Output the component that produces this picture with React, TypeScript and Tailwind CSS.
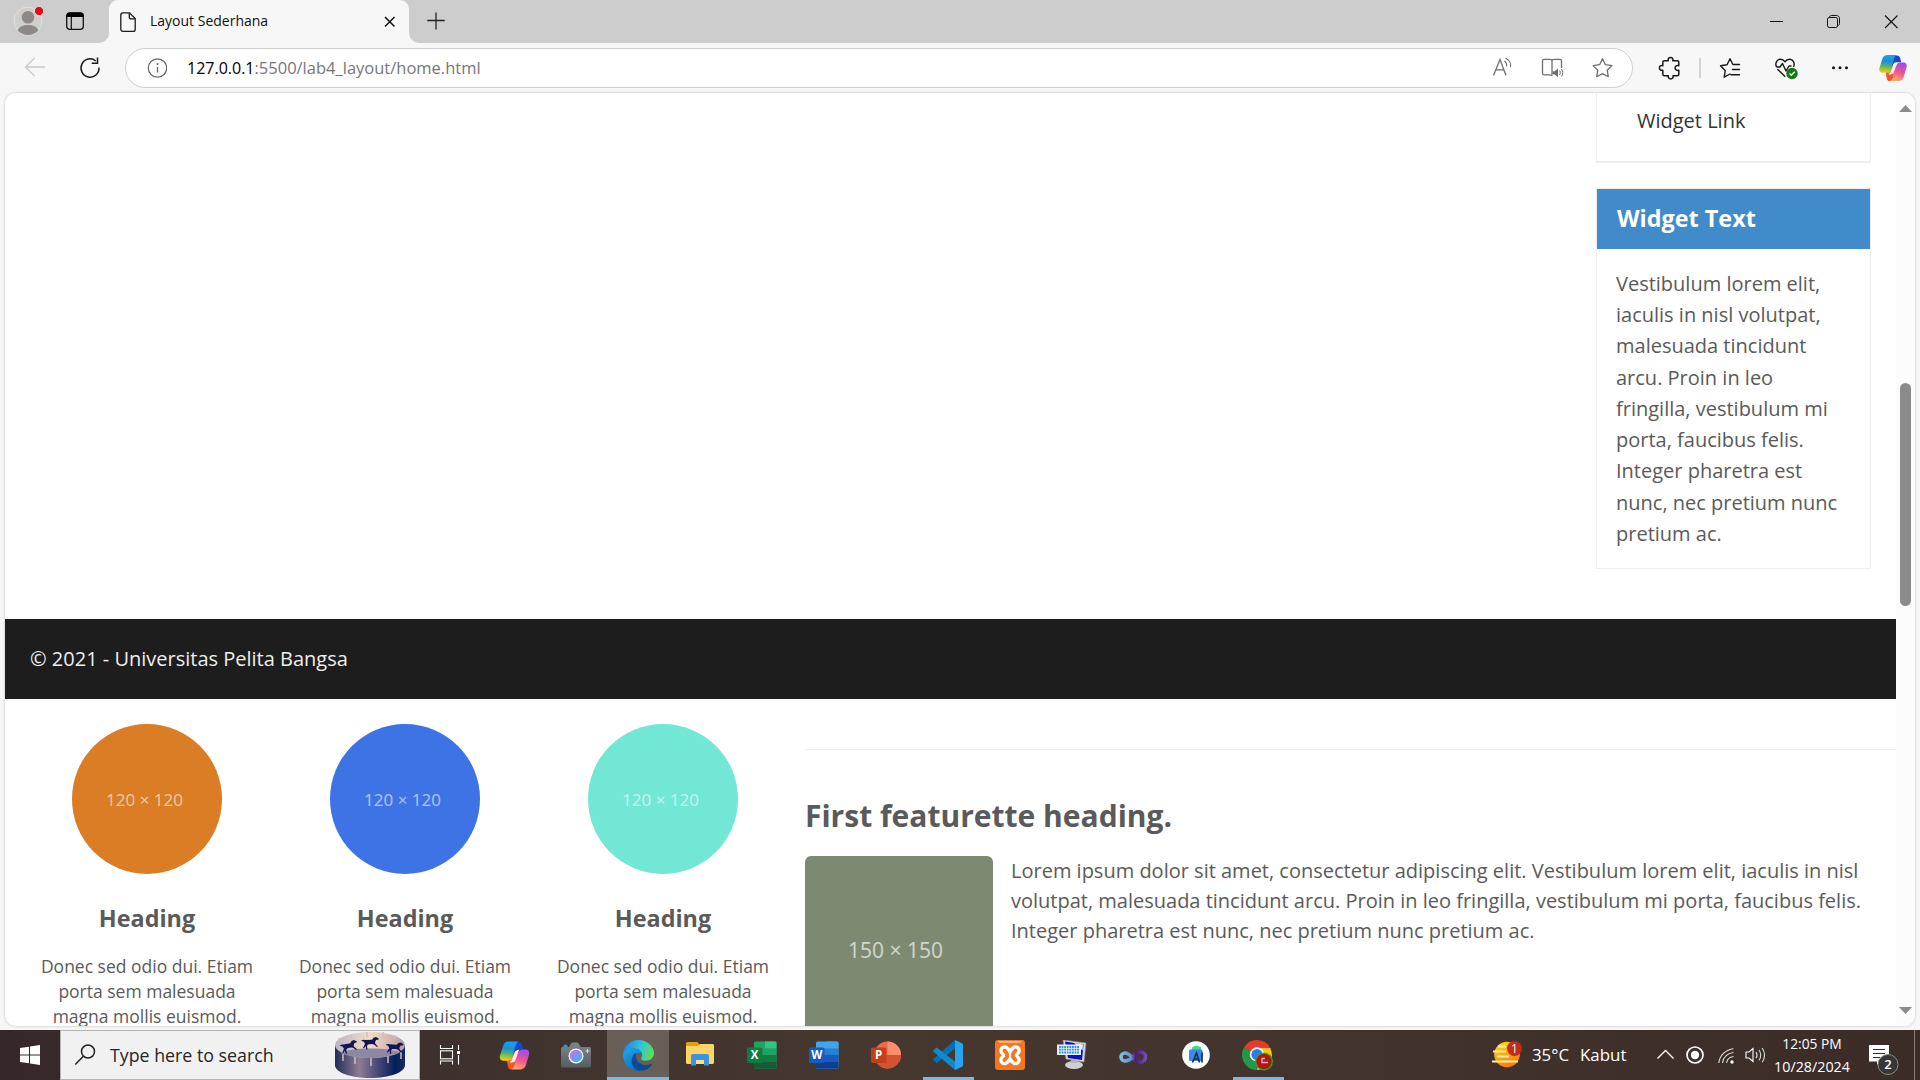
import type { ReactNode } from "react";

function Svg({ w, h, vb, className = "", children }: { w: number; h: number; vb?: string; className?: string; children: ReactNode }) {
  return (
    <svg width={w} height={h} viewBox={vb ?? `0 0 ${w} ${h}`} fill="none" className={`block shrink-0 ${className}`}>
      {children}
    </svg>
  );
}

function CopilotIcon({ size, id }: { size: number; id: string }) {
  return (
    <Svg w={size} h={size} vb="0 0 30 30">
      <defs>
        <linearGradient id={`${id}a`} x1="8" y1="2" x2="6" y2="20" gradientUnits="userSpaceOnUse">
          <stop offset="0" stopColor="#1b9ff0" />
          <stop offset="0.35" stopColor="#1c8fd8" />
          <stop offset="0.65" stopColor="#62b95c" />
          <stop offset="1" stopColor="#fbd107" />
        </linearGradient>
        <linearGradient id={`${id}b`} x1="24" y1="10" x2="18" y2="29" gradientUnits="userSpaceOnUse">
          <stop offset="0" stopColor="#a14ee8" />
          <stop offset="0.5" stopColor="#ee5591" />
          <stop offset="1" stopColor="#ffad6b" />
        </linearGradient>
      </defs>
      <path d="M12 2h7c2 0 3 1 3.500 3l1 4h-5c-2 0-3 1-3.600 3l-4 14" fill="#1648c8" />
      <path d="M9 17l6-4h4l-3 12c-.6 2-1.800 3.500-3.500 3.500h-1c-1.600 0-2.400-1-2.800-2.500L7.500 20z" fill="#f2542d" />
      <path d="M9.500 1.500h10c-1.500.2-2.600 1.500-3.200 3.300L12.800 17c-.7 2.300-2 3-4 3H4.500C1.500 20 .2 18 1 15L4 5.500c.8-2.500 2.500-4 5.500-4z" fill={`url(#${id}a)`} />
      <path d="M20.500 28.500h-8.700c1.400-.3 2.200-1.500 2.800-3.300L18.200 13c.7-2.500 2-3.700 4-3.700h3.300c3 0 4.300 2 3.500 5L26 24.500c-.8 2.500-2.500 4-5.500 4z" fill={`url(#${id}b)`} />
      <path d="M15.600 11l1.300-.9c.8-.5 1.600-.8 2.600-.8l-4 11.500-2.700 1c-1 .3-2 .1-2.800-.6 1.500-.6 2.300-1.600 2.800-3.400z" fill="#fbe9ee" />
    </Svg>
  );
}

function TabStrip() {
  return (
    <div className="flex h-[43px] shrink-0 bg-[#cdcdcd]">
      <div className="flex w-[109px] shrink-0 items-start rounded-br-[10px]">
        <Svg w={34} h={36} className="ml-3">
          <circle cx="16" cy="21" r="14" fill="#d1cfcd" stroke="#e3e1df" />
          <circle cx="16" cy="17.300" r="6.300" fill="#8e8986" />
          <path d="M5.800 30.500C7 26.500 11 25 16 25s9 1.500 10.200 5.500A14 14 0 0 1 16 35a14 14 0 0 1-10.200-4.500z" fill="#8e8986" />
          <circle cx="27" cy="11" r="4.600" fill="#e30b12" stroke="#e6dcdb" />
        </Svg>
        <Svg w={20} h={20} className="mt-[11px] ml-[19px]">
          <rect x="1.700" y="2" width="16.600" height="16.300" rx="3" stroke="#111" strokeWidth="1.300" />
          <path d="M1.500 6V4.500a3 3 0 0 1 3-3h11a3 3 0 0 1 3 3V6z" fill="#000" />
          <path d="M6.300 6v12" stroke="#111" strokeWidth="1.200" />
        </Svg>
      </div>
      <div className="relative flex w-[300px] shrink-0 rounded-t-[9px] bg-[#f7f7f7]">
        <Svg w={10} h={10} className="absolute bottom-0 -left-[10px]"><path d="M10 0v10H0A10 10 0 0 0 10 0z" fill="#f7f7f7" /></Svg>
        <Svg w={10} h={10} className="absolute -right-[10px] bottom-0"><path d="M0 0v10h10A10 10 0 0 1 0 0z" fill="#f7f7f7" /></Svg>
        <Svg w={16} h={21} className="mt-[12px] ml-[11px]">
          <path d="M3 .8h6.500l5.700 5.700v10.700a2.200 2.200 0 0 1-2.200 2.200H3a2.200 2.200 0 0 1-2.200-2.200V3A2.200 2.200 0 0 1 3 .8z" stroke="#1a1a1a" strokeWidth="1.300" />
          <path d="M9.300 1v3.900c0 1.100.8 1.900 1.900 1.900h3.900" stroke="#1a1a1a" strokeWidth="1.300" />
        </Svg>
        <span className="mt-[11px] ml-[14px] text-[14px] leading-5 text-[#111]">Layout Sederhana</span>
        <Svg w={12} h={12} className="mt-[16px] mr-[13px] ml-auto"><path d="M1 1l9.500 9.500M10.500 1L1 10.500" stroke="#111" strokeWidth="1.500" /></Svg>
      </div>
      <Svg w={18} h={18} className="mt-[12px] ml-[18px]"><path d="M9 .5v17M.3 8.500h17.400" stroke="#222" strokeWidth="1.300" /></Svg>
      <Svg w={160} h={43} className="ml-auto">
        <path d="M10 21.500h13" stroke="#111" />
        <rect x="67.500" y="17.500" width="10" height="10" rx="1.800" stroke="#111" />
        <path d="M69.500 17.500c0-1.300.8-2 2-2h4.800c2 0 3.200 1.200 3.200 3.200v4.800c0 1.200-.7 2-2 2" stroke="#111" />
        <path d="M125 15.500l12.500 12.500M137.500 15.500L125 28" stroke="#111" strokeWidth="1.100" />
      </Svg>
    </div>
  );
}

function Toolbar() {
  return (
    <div className="flex h-[49px] shrink-0 items-start bg-[#f7f7f7]">
      <Svg w={22} h={20} className="mt-[14px] ml-[24px]"><path d="M21 10H1.500M10.500 1L1.500 10l9 9" stroke="#c9c9c9" strokeWidth="1.300" /></Svg>
      <Svg w={22} h={22} className="mt-[14px] ml-[33px]">
        <path d="M20 10.500A9 9.200 0 1 1 16.800 4" stroke="#1a1a1a" strokeWidth="1.500" />
        <path d="M18.500.5v5.800h-5.800" stroke="#1a1a1a" strokeWidth="1.500" />
      </Svg>
      <div className="mt-[5px] ml-[24px] flex h-[40px] w-[1508px] shrink-0 items-center rounded-full border border-[#cecece] bg-white">
        <Svg w={20} h={20} className="ml-[21px]">
          <circle cx="10.500" cy="10" r="9.200" stroke="#666" strokeWidth="1.200" />
          <path d="M10.500 9v5.500" stroke="#666" strokeWidth="1.300" />
          <circle cx="10.500" cy="6" r="1" fill="#666" />
        </Svg>
        <span className="ml-[20px] text-[16.500px] leading-6 whitespace-nowrap text-[#777]">
          <span className="text-[16px] text-black">127.0.0.1</span>:5500/lab4_layout/home.html
        </span>
        <Svg w={130} h={24} className="mr-[10px] ml-auto">
          <g stroke="#6e6e6e" strokeWidth="1.300">
            <path d="M1.500 19.500L8 3.500l6 16M4 13.800h8" />
            <path d="M12.500 5a5.500 5.500 0 0 1 2 5.500M13.500 2.200c3.500 1.500 6 5 5 9" strokeWidth="1.100" />
            <path d="M60 18.500V5c0-1-.6-1.700-1.700-1.700h-6.100c-1 0-1.700.7-1.700 1.700v12.200c0 1 .7 1.700 1.700 1.700h6.100c1 0 1.700.3 1.700 1M60 5c0-1 .7-1.700 1.700-1.700h6.100c1 0 1.700.7 1.700 1.700v7" />
            <path d="M67.500 14.500c1 1.500 1 3 0 4.500M69.500 13c1.700 2.300 1.700 5.200 0 7.500" strokeWidth="1" />
            <path d="M110.500 2.800l2.900 5.900 6.500.9-4.700 4.600 1.100 6.500-5.800-3.100-5.800 3.100 1.100-6.500-4.700-4.600 6.500-.9z" strokeLinejoin="round" />
          </g>
          <path d="M60.500 15.300h2.300l3.200-2.800v8.800l-3.200-2.800h-2.300z" fill="#6e6e6e" />
        </Svg>
      </div>
      <Svg w={287} h={49}>
        <g stroke="#1a1a1a" strokeWidth="1.500" strokeLinejoin="round" strokeLinecap="round">
          <path d="M30.500 17.500h4c-.7-2 .7-3.300 2.200-3.300s3 1.300 2.300 3.300h4.500a1.500 1.500 0 0 1 1.500 1.500v3.500c-2-.7-3.700.5-3.700 2.200s1.700 3 3.700 2.300v4a1.500 1.500 0 0 1-1.500 1.500h-4.300c.6 2-.7 3.200-2.300 3.200s-2.900-1.200-2.400-3.200h-4a1.500 1.500 0 0 1-1.500-1.500v-4c-2 .6-3.400-.7-3.400-2.300s1.400-2.800 3.400-2.200V19a1.500 1.500 0 0 1 1.500-1.500z" transform="translate(.8 .2)" />
          <path d="M97 31l-5.800 3.200 1-6.700-4.700-4.700 6.500-1 3-6.100 2.900 5.800h6.600M99.500 26.500h7M98 31.700h8.500" strokeWidth="1.400" />
          <path d="M143.300 23.500c-1.300-3.500.6-7 4-7.200 2-.1 3.400.8 4.700 2.500 1.300-1.700 2.700-2.600 4.700-2.500 3.500.2 5.300 3.700 4 7.200M144 24h3l2.500-3.500 3.500 7.500 3-5h2M144.800 26.500l7 6.800" strokeWidth="1.400" />
        </g>
        <path d="M67 15v20" stroke="#c8c8c8" strokeWidth="1.500" />
        <circle cx="159" cy="30.500" r="5.700" fill="#107c10" />
        <path d="M156.500 30.500l1.800 1.800 3.400-3.600" stroke="#fff" strokeWidth="1.300" />
        <circle cx="200.500" cy="24.700" r="1.500" fill="#111" />
        <circle cx="207" cy="24.700" r="1.500" fill="#111" />
        <circle cx="213.500" cy="24.700" r="1.500" fill="#111" />
        <g transform="translate(245.500 10.500)"><CopilotIcon size={29} id="cpt" /></g>
      </Svg>
    </div>
  );
}

const circles = ["bg-[#da7d25]", "bg-[#3e73e6]", "bg-[#72e7d5]"];

function Page() {
  return (
    <div className="h-full w-[1891px] shrink-0 overflow-hidden text-[20px] text-[#5a5a5a]">
      <div className="flex h-[526px] justify-end pr-[25px]">
        <aside className="w-[275px]">
          <div className="h-[70px] border border-t-0 border-b-2 border-[#eee] pt-[12px] pl-[40px] leading-[31px] text-[#333]">Widget Link</div>
          <div className="mt-[25px] h-[381px] border border-[#eee]">
            <h3 className="h-[60px] bg-[#428bca] pl-[20px] text-[23.400px] leading-[59px] font-bold text-white">Widget Text</h3>
            <p className="pt-[18.800px] pl-[19px] leading-[31.250px] whitespace-nowrap">
              Vestibulum lorem elit,<br />iaculis in nisl volutpat,<br />malesuada tincidunt<br />arcu. Proin in leo<br />fringilla, vestibulum mi<br />porta, faucibus felis.<br />Integer pharetra est<br />nunc, nec pretium nunc<br />pretium ac.
            </p>
          </div>
        </aside>
      </div>
      <footer className="h-[80px] bg-[#1d1d1d] pl-[25px] leading-[79px] text-[#eee]">© 2021 - Universitas Pelita Bangsa</footer>
      <div className="flex">
        <div className="flex w-[800px] shrink-0 pl-[13px]">
          {circles.map((color) => (
            <div key={color} className="w-[258px] pt-[25px] text-center">
              <div className={`mx-auto h-[150px] w-[150px] rounded-full text-[17px] leading-[151px] text-white/60 ${color}`}>
                <span className="-ml-[5px]">120 × 120</span>
              </div>
              <h3 className="mt-[28px] text-[23.400px] leading-[32px] font-bold">Heading</h3>
              <p className="mt-[20px] text-[17.500px] leading-[25px]">Donec sed odio dui. Etiam<br />porta sem malesuada<br />magna mollis euismod.</p>
            </div>
          ))}
        </div>
        <div className="min-w-0 flex-1 pt-[50px]">
          <hr className="border-t border-[#eee]" />
          <h2 className="mt-[47px] text-[30px] leading-[38px] font-bold">First featurette heading.</h2>
          <div className="mt-[21px] flex">
            <div className="h-[188px] w-[188px] shrink-0 rounded-md bg-[#7d8a71] text-center text-[21px] leading-[188px] text-white/65">
              <span className="-ml-[7px]">150 × 150</span>
            </div>
            <p className="ml-[18px] leading-[30px] whitespace-nowrap">
              Lorem ipsum dolor sit amet, consectetur adipiscing elit. Vestibulum lorem elit, iaculis in nisl<br />
              volutpat, malesuada tincidunt arcu. Proin in leo fringilla, vestibulum mi porta, faucibus felis.<br />
              Integer pharetra est nunc, nec pretium nunc pretium ac.
            </p>
          </div>
        </div>
      </div>
    </div>
  );
}

function ScrollBar() {
  return (
    <div className="flex w-[19px] shrink-0 flex-col items-center bg-[#fcfcfc] pt-[12px] pb-[12px]">
      <Svg w={13} h={7}><path d="M6.500 0L13 7H0z" fill="#8b8b8b" /></Svg>
      <div className="mt-[271px] h-[223px] w-[11px] rounded-full bg-[#8b8b8b]" />
      <Svg w={13} h={7} className="mt-auto"><path d="M6.500 7L13 0H0z" fill="#8b8b8b" /></Svg>
    </div>
  );
}

function OfficeIcon({ letter, tile, bands, round }: { letter: string; tile: string; bands: string[]; round?: boolean }) {
  return (
    <Svg w={30} h={28}>
      {round ? (
        <>
          <circle cx="16.500" cy="14" r="13.500" fill={bands[0]} />
          <path d="M16.500.5A13.500 13.500 0 0 1 30 14H16.500z" fill={bands[1]} />
          <path d="M3 14h27a13.500 13.500 0 0 1-27 0z" fill={bands[2]} />
        </>
      ) : (
        <>
          <rect x="7" y=".5" width="22.500" height="27" rx="1.500" fill={bands[0]} />
          <path d="M18 .5h10a1.500 1.500 0 0 1 1.500 1.500v5.500H18z" fill={bands[1]} />
          <path d="M7 14h22.500v7H7z" fill={bands[2]} />
          <path d="M7 21h22.500v5a1.500 1.500 0 0 1-1.500 1.500H8.500A1.500 1.500 0 0 1 7 26z" fill={bands[3]} />
          {letter === "X" && <path d="M18 7.500h11.500V14H18z" fill="#21a366" />}
          {letter === "W" && <path d="M7 7.500h22.500V14H7z" fill="#2b7cd3" />}
        </>
      )}
      <rect x="0" y="6.500" width="15.500" height="15.500" rx="1.500" fill={tile} />
      <text x="7.700" y="18.200" textAnchor="middle" fontSize="11.500" fontWeight="700" fill="#fff">{letter}</text>
    </Svg>
  );
}

const apps: { name: string; active?: boolean; line?: boolean; icon: ReactNode }[] = [
  {
    name: "tasks",
    icon: (
      <Svg w={22} h={20} className="-ml-[4px]">
        <path d="M1.500 0v3.500h12V0M1.500 19.500V16h12v3.500" stroke="#fff" strokeWidth="1.100" />
        <rect x="1.500" y="5.800" width="12" height="8" stroke="#fff" strokeWidth="1.100" />
        <path d="M19.500 0v5M19.500 10v9.500" stroke="#fff" strokeWidth="1.100" />
        <rect x="18" y="6" width="3" height="3" fill="#fff" />
      </Svg>
    ),
  },
  { name: "copilot", icon: <CopilotIcon size={31} id="cpb" /> },
  {
    name: "camera",
    icon: (
      <Svg w={30} h={28}>
        <defs>
          <linearGradient id="lens" x1="11" y1="8" x2="20" y2="20" gradientUnits="userSpaceOnUse"><stop stopColor="#d073dc" /><stop offset=".5" stopColor="#8a8df0" /><stop offset="1" stopColor="#22c0ee" /></linearGradient>
          <linearGradient id="body" x1="15" y1="3" x2="15" y2="27" gradientUnits="userSpaceOnUse"><stop stopColor="#7c848b" /><stop offset="1" stopColor="#555c63" /></linearGradient>
        </defs>
        <path d="M2 8c0-3 1-4.500 2.500-4.500S7 5 7 8z" fill="#1ba6e0" />
        <path d="M0 8.500C0 7 .7 6.300 1.500 6h6.500l2-3.500c.4-.7 1-1 1.800-1h4c.8 0 1.400.3 1.800 1l2 3.500h8.900c.8 0 1.500.5 1.500 1.500V25c0 .8-.7 1.500-1.500 1.500h-27A1.500 1.500 0 0 1 0 25z" fill="url(#body)" />
        <circle cx="15" cy="15" r="7.500" fill="#fff" />
        <circle cx="15" cy="15" r="6.200" fill="url(#lens)" />
        <path d="M26.500 8v4M24.500 10h4" stroke="#c7dbe4" strokeWidth="1.200" />
      </Svg>
    ),
  },
  {
    name: "edge",
    active: true,
    icon: (
      <Svg w={31} h={31} vb="0 0 30 30">
        <defs>
          <linearGradient id="eg" x1="3" y1="6" x2="29" y2="16" gradientUnits="userSpaceOnUse"><stop stopColor="#1d8fe0" /><stop offset=".45" stopColor="#2fc3dd" /><stop offset="1" stopColor="#62e04e" /></linearGradient>
          <linearGradient id="eb" x1="2" y1="12" x2="16" y2="30" gradientUnits="userSpaceOnUse"><stop stopColor="#1c9fe4" /><stop offset="1" stopColor="#0a63c9" /></linearGradient>
        </defs>
        <path d="M0 14C.5 6 7 0 15 0s15 6 15 12.500c0 4.500-3.500 7.500-8 7.500-3.500 0-5-1.200-4.500-2.300 1.500-2 1.400-4.700-.2-6.500C13 6.500 4 7.500 0 14z" fill="url(#eg)" />
        <path d="M0 14c2-4.500 6-5.800 10-5.800 3.800 0 7 1.700 8.300 5-4-1.700-9.300.8-9.300 6.300 0 5 4 9.300 8.500 10.300C8 31.300 0 24 0 14z" fill="url(#eb)" />
        <path d="M12.500 12.600C9.800 14 8.300 17 8.300 20c0 5.500 4.700 9.700 9.700 9.700 4 0 8-2.700 10-6 .4-.7-.2-1-.8-.7-5 2.500-11 .8-13.500-3.200-1.600-2.600-1.500-5.200-1.200-7.200z" fill="#0b4a94" />
      </Svg>
    ),
  },
  {
    name: "folder",
    icon: (
      <Svg w={28} h={24} className="-mt-[3px]">
        <path d="M0 3V1.500C0 .7.700 0 1.500 0h10l2 2.500V8H0z" fill="#e2a00a" />
        <path d="M0 4h12l2-2h12.500c.8 0 1.500.7 1.500 1.500v17c0 .8-.7 1.500-1.500 1.500h-25A1.500 1.500 0 0 1 0 20.500z" fill="#ffd466" />
        <path d="M5 23.500V14a2 2 0 0 1 2-2h14a2 2 0 0 1 2 2v9.500h-5V18h-8v5.500z" fill="#3c94dc" />
        <path d="M10 18h8v4h-8z" fill="#ffe08a" />
      </Svg>
    ),
  },
  { name: "excel", icon: <OfficeIcon letter="X" tile="#107c41" bands={["#21a366", "#33c481", "#107c41", "#185c37"]} /> },
  { name: "word", icon: <OfficeIcon letter="W" tile="#185abd" bands={["#41a5ee", "#41a5ee", "#185abd", "#103f91"]} /> },
  { name: "powerpoint", icon: <OfficeIcon letter="P" tile="#c43e1c" bands={["#ed6c47", "#ff8f6b", "#d35230"]} round /> },
  {
    name: "code",
    line: true,
    icon: (
      <Svg w={30} h={30}>
        <path d="M22 0l6.500 3c1 .5 1.500 1.200 1.500 2.300v19.400c0 1.100-.5 1.800-1.500 2.300L22 30z" fill="#2aa3ee" />
        <path d="M22 0v8.500L3.800 23l-3-2.200c-1-.8-1-1.600 0-2.400z" fill="#0071b7" />
        <path d="M22 30v-8.500L3.800 7.500l-3 2.200c-1 .8-1 1.600 0 2.400z" fill="#1288d0" />
      </Svg>
    ),
  },
  {
    name: "xampp",
    icon: (
      <Svg w={30} h={30}>
        <rect width="30" height="30" rx="3" fill="#f37622" />
        <path d="M3 1h24l-2 2H5z" fill="#fbb98b" />
        <path d="M9.500 10.500l11 9.500M20.500 10.500l-11 9.500" stroke="#fff" strokeWidth="10.500" strokeLinecap="round" />
        <path d="M9.500 10.500l2.500 3.200v3.300l-2.500 3M20.500 10.500L18 13.700V17l2.500 3" stroke="#f37622" strokeWidth="3.800" strokeLinecap="round" strokeLinejoin="round" />
      </Svg>
    ),
  },
  {
    name: "keyboard",
    icon: (
      <Svg w={30} h={30}>
        <path d="M6 0l23 3-2 19-18-3z" fill="#d5d5d5" stroke="#999" strokeWidth=".6" />
        <path d="M8 1.500l18.500 3L25 20l-14-2z" fill="#0a10c4" />
        <path d="M17 3l9 1.500-.5 6z" fill="#eef" />
        <ellipse cx="17" cy="25" rx="9" ry="4" fill="#cfcfcf" />
        <path d="M14 19h6v4h-6z" fill="#b5b5b5" />
        <rect x="0" y="4.500" width="24" height="10.500" fill="#e8eef2" />
        <path d="M2 7h20M2 9.700h20M2 12.500h20" stroke="#2b95d8" strokeWidth="1.800" strokeDasharray="1.800 .8" />
      </Svg>
    ),
  },
  {
    name: "studio",
    icon: (
      <Svg w={29} h={16} className="mt-[3px] -ml-[3px]">
        <defs><linearGradient id="vs" x1="0" y1="8" x2="29" y2="8" gradientUnits="userSpaceOnUse"><stop stopColor="#7ccbe8" /><stop offset=".45" stopColor="#6d8ed0" /><stop offset=".6" stopColor="#4b1789" /><stop offset="1" stopColor="#7a4fc2" /></linearGradient></defs>
        <path d="M15 8c-3 3-5.500 4-8 4a3.800 3.800 0 1 1 0-8c2.500 0 4.500 1.500 7.500 4.500s5.200 5 8 4.500a5 5 0 0 0 0-10c-3 0-5 2.500-7.500 5z" stroke="url(#vs)" strokeWidth="3.600" />
      </Svg>
    ),
  },
  {
    name: "android",
    icon: (
      <Svg w={28} h={28} className="-ml-px">
        <circle cx="14" cy="14" r="13.800" fill="#fff" />
        <path d="M9.500 9.500a5 4.800 0 0 1 10 0z" fill="#3ddc84" />
        <path d="M10.500 6l1.200 1.500M18.500 6l-1.200 1.500" stroke="#3ddc84" />
        <rect x="7" y="8.500" width="13.500" height="11.500" rx="1.500" fill="#3f86e8" />
        <path d="M10.500 21.500L14.500 12 17.500 21.500M11.500 18h5M20 11.500V21.500" stroke="#123047" strokeWidth="1.600" />
      </Svg>
    ),
  },
  {
    name: "chrome",
    line: true,
    icon: (
      <Svg w={32} h={31}>
        <path d="M15 15L2 7.500A15 15 0 0 1 28.500 8.500z" fill="#e33b2e" />
        <path d="M15 15L2 7.500A15 15 0 0 0 14 30l6-11z" fill="#23984a" />
        <path d="M15 8h13.200A15 15 0 0 1 14.500 30l6-11z" fill="#fcc31e" />
        <circle cx="15" cy="14.500" r="7.200" fill="#fff" />
        <circle cx="15" cy="14.500" r="5.600" fill="#2f7de1" />
        <circle cx="22" cy="21.500" r="9" fill="#5a8f1f" />
        <circle cx="22" cy="21.500" r="7.600" fill="#5a3a1d" />
        <rect x="16" y="15.500" width="12" height="12" rx="2" fill="#b81414" />
        <path d="M23 18.500h-3v4h6" stroke="#e8b0a8" strokeWidth="1.300" />
      </Svg>
    ),
  },
];

function Dog({ x, y, r = 0 }: { x: number; y: number; r?: number }) {
  return (
    <path
      transform={`translate(${x} ${y}) rotate(${r})`}
      d="M-1 3.500L1.500 2.800 3 3l7-.3 1.500-2L14 0l3 1.800-1 1-2 .2-1 2.500.5 1.500 2.500 2.500-1 .6-3-2.600-2.500-.5-3.500.5-1 1.500.5 3.300-1.200.2-.8-3.500L2 11.500l-1-.7L3 7 2 5z"
      fill="#14145a"
    />
  );
}

function Taskbar() {
  return (
    <div className="flex h-[50px] shrink-0 overflow-hidden bg-linear-to-r from-[#36282a] via-[#46382f] via-45% to-[#3c2c28] text-white">
      <div className="flex w-[60px] shrink-0 items-center justify-center">
        <Svg w={20} h={20}>
          <path d="M0 3l9-1.300v7.800H0zM10 1.500L20 0v9.500H10zM0 10.500h9v7.800L0 17zM10 10.500h10V20l-10-1.500z" fill="#fff" />
        </Svg>
      </div>
      <div className="flex w-[360px] shrink-0 items-center border border-[#b4b4b4] bg-[#f1f1f1] text-[#262626]">
        <Svg w={22} h={22} className="ml-[13px]">
          <circle cx="14" cy="7.500" r="6.500" stroke="#222" strokeWidth="1.500" />
          <path d="M9.300 12.300L1.300 20.500" stroke="#222" strokeWidth="1.500" />
        </Svg>
        <span className="ml-[14px] text-[17.800px] leading-6">Type here to search</span>
        <Svg w={72} h={48} className="mr-[13px] ml-auto">
          <defs>
            <linearGradient id="drum" x1="0" y1="0" x2="72" y2="0" gradientUnits="userSpaceOnUse"><stop stopColor="#1c2a57" /><stop offset=".35" stopColor="#8f7c93" /><stop offset=".6" stopColor="#4b4a76" /><stop offset=".85" stopColor="#04205a" /><stop offset="1" stopColor="#1c2c5c" /></linearGradient>
            <linearGradient id="inner" x1="0" y1="0" x2="72" y2="0" gradientUnits="userSpaceOnUse"><stop stopColor="#b9b4c4" /><stop offset=".5" stopColor="#f3dcc4" /><stop offset="1" stopColor="#b49a9c" /></linearGradient>
          </defs>
          <path d="M1 14v20c0 7.500 15.500 13 35 13s35-5.500 35-13V14z" fill="url(#drum)" />
          <ellipse cx="36" cy="14" rx="35" ry="13" fill="url(#inner)" />
          <path d="M6 21.500c7-2.500 17-4 30-4s23 1.500 30 4c-6 3.500-17 5.500-30 5.500s-24-2-30-5.500z" fill="#8d88a4" />
          <path d="M9 23v7M21 26v7M37 27v8M54 25v7M67 21v7M5 7v3M17 3v4M33 1v5M49 1v5M61 4v4" stroke="#cdbfc8" strokeWidth="1.500" />
          <Dog x={6} y={11} r={-8} />
          <Dog x={28} y={6} />
          <Dog x={53} y={10} r={6} />
        </Svg>
      </div>
      <div className="ml-px flex">
        {apps.map((a) => (
          <div key={a.name} className={`relative flex w-[62px] items-center justify-center ${a.active ? "bg-[#6a5f58]" : ""}`}>
            {a.icon}
            {a.active && <div className="absolute inset-x-0 bottom-0 h-[3px] bg-[#76b9ed]" />}
            {a.line && <div className="absolute right-[5px] bottom-0 left-[6px] h-[3px] bg-[#76b9ed]" />}
          </div>
        ))}
      </div>
      <div className="ml-auto flex w-[429px] shrink-0 items-center">
        <Svg w={32} h={30} className="-mt-[3px]">
          <defs><linearGradient id="sun" x1="8" y1="3" x2="20" y2="28" gradientUnits="userSpaceOnUse"><stop stopColor="#ffd80a" /><stop offset="1" stopColor="#f27a0c" /></linearGradient></defs>
          <circle cx="16" cy="15.500" r="12.800" fill="url(#sun)" />
          <path d="M7 7.500h8M2 12.500h13M6 17.500h12M1 22.500h26" stroke="#ffe9b0" strokeWidth="1.900" />
          <circle cx="23.500" cy="9.500" r="7.500" fill="#c42b1c" />
          <text x="23.500" y="13.800" textAnchor="middle" fontSize="12" fill="#fff">1</text>
        </Svg>
        <span className="ml-[9px] w-[48px] text-[16.800px] leading-6">35°C</span>
        <span className="w-[76px] text-[16.900px] leading-6">Kabut</span>
        <Svg w={112} h={24} className="-mt-px">
          <path d="M1.500 15.500L9.500 7.500l8 8" stroke="#fff" strokeWidth="1.300" />
          <circle cx="39" cy="12" r="8" stroke="#fff" strokeWidth="1.700" />
          <circle cx="39" cy="12" r="4.200" fill="#fff" />
          <circle cx="76" cy="19" r="1.700" fill="#fff" />
          <path d="M70.500 20c.5-3.500 3-6 7-6.500M66.500 20c.8-5.800 5-9.700 11-10.500M62.800 20c1-8 7-13.300 14.700-14.300" stroke="#ddd" strokeWidth="1.100" />
          <path d="M90 9h3l4-3.500v13L93 15h-3z" stroke="#fff" strokeWidth="1.100" />
          <path d="M100 9c1.300 2 1.300 4.300 0 6.300M103 7c2.200 3.300 2.200 7 0 10.300M106.200 5c3 4.500 3 9.800 0 14.300" stroke="#ddd" strokeWidth="1.100" />
        </Svg>
        <div className="flex w-[84px] flex-col items-center pl-[4px] leading-[23px] whitespace-nowrap">
          <span className="text-[13.800px]">12:05 PM</span>
          <span className="text-[14.300px]">10/28/2024</span>
        </div>
        <Svg w={34} h={34} className="mt-[9px] ml-[15px]">
          <path d="M2 2h20v16.500h-8L10 22v-3.500H2z" fill="#fff" />
          <path d="M6 6.500h12M6 10.500h12M6 14.500h7" stroke="#3c2c28" strokeWidth="1.200" />
          <circle cx="21" cy="21.500" r="10" fill="#363636" stroke="#8a8a8a" />
          <text x="21" y="26.300" textAnchor="middle" fontSize="13" fontWeight="600" fill="#fff">2</text>
        </Svg>
        <div className="mr-[5px] ml-auto h-full w-px bg-[#8b807c]" />
      </div>
    </div>
  );
}

export default function App() {
  return (
    <div className="flex h-[1080px] w-[1920px] flex-col overflow-hidden bg-[#f7f7f7] font-['Open_Sans','Noto_Sans',sans-serif]">
      <TabStrip />
      <Toolbar />
      <div className="flex min-h-0 flex-1 px-[5px] pt-px pb-[4px]">
        <div className="flex flex-1 overflow-hidden rounded-[11px] bg-white shadow-[0_0_2px_1px_#dcdcdc]">
          <Page />
          <ScrollBar />
        </div>
      </div>
      <Taskbar />
    </div>
  );
}
